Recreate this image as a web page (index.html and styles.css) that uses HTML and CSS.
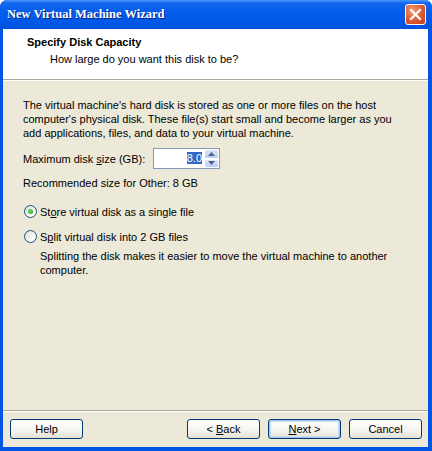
FILE: index.html
```html
<!DOCTYPE html>
<html lang="en">
<head>
    <meta charset="UTF-8">
    <title>New Virtual Machine Wizard</title>
    <link rel="stylesheet" href="styles.css">
</head>
<body>
    <div class="window">
        <div class="titlebar">
            <span class="title">New Virtual Machine Wizard</span>
            <span class="close">
                <svg width="13" height="13" viewBox="0 0 13 13">
                    <path d="M2 2 L11 11 M11 2 L2 11" stroke="#fff" stroke-width="2.2" stroke-linecap="square"/>
                </svg>
            </span>
        </div>

        <div class="frame">
            <div class="header">
                <div class="header-title">Specify Disk Capacity</div>
                <div class="header-sub">How large do you want this disk to be?</div>
            </div>

            <div class="content">
                <p class="intro">The virtual machine's hard disk is stored as one or more files on the host computer's physical disk. These file(s) start small and become larger as you add applications, files, and data to your virtual machine.</p>

                <div class="size-row">
                    <label>Maximum disk <u>s</u>ize (GB):</label>
                    <div class="spin">
                        <span class="spin-value"><span class="sel">8.0</span></span>
                        <span class="spin-btns">
                            <span class="spin-btn">
                                <svg width="7" height="4" viewBox="0 0 7 4"><path d="M0 4 L3.5 0 L7 4 Z" fill="#4d6185"/></svg>
                            </span>
                            <span class="spin-btn">
                                <svg width="7" height="4" viewBox="0 0 7 4"><path d="M0 0 L3.5 4 L7 0 Z" fill="#4d6185"/></svg>
                            </span>
                        </span>
                    </div>
                </div>

                <p class="recommended">Recommended size for Other: 8 GB</p>

                <div class="radio-row first">
                    <span class="radio checked"></span>
                    <span>St<u>o</u>re virtual disk as a single file</span>
                </div>
                <div class="radio-row">
                    <span class="radio"></span>
                    <span>S<u>p</u>lit virtual disk into 2 GB files</span>
                </div>
                <p class="note">Splitting the disk makes it easier to move the virtual machine to another computer.</p>
            </div>

            <div class="footer">
                <button class="btn">Help</button>
                <div class="nav">
                    <button class="btn">&lt; <u>B</u>ack</button>
                    <button class="btn default"><u>N</u>ext &gt;</button>
                    <button class="btn">Cancel</button>
                </div>
            </div>
        </div>
    </div>
</body>
</html>
```

FILE: styles.css
```css
body {
    margin: 0;
    font-family: 'Liberation Sans', Arial, sans-serif;
    font-size: 11px;
    color: #000;
    background: #fff;
}

.window {
    width: 432px;
    height: 451px;
    display: flex;
    flex-direction: column;
    background: #0055e5;
    border-radius: 7px 7px 0 0;
    overflow: hidden;
}

.titlebar {
    height: 29px;
    flex-shrink: 0;
    display: flex;
    align-items: center;
    justify-content: space-between;
    padding: 0 6px 0 7px;
    background: linear-gradient(#4a98fa 0, #1467ee 3px, #0860ec 8px, #0058e8 22px, #0052dc 29px);
}

.title {
    font-family: 'Liberation Serif', serif;
    font-weight: bold;
    font-size: 12.5px;
    color: #fff;
    text-shadow: 1px 1px 0 #0a1e80;
}

.close {
    width: 21px;
    height: 21px;
    box-sizing: border-box;
    border: 1px solid #fff;
    border-radius: 3px;
    background: radial-gradient(circle at 35% 30%, #f29a7a, #e0582f 55%, #c03c16);
    display: flex;
    align-items: center;
    justify-content: center;
}

.frame {
    flex: 1;
    display: flex;
    flex-direction: column;
    margin: 0 4px 4px 3px;
    background: #ece9d8;
}

.header {
    height: 51px;
    background: #fff;
    border-bottom: 1px solid #aca899;
    box-shadow: 0 1px 0 #fff;
    padding: 6px 0 0 24px;
    box-sizing: border-box;
}

.header-title {
    font-weight: bold;
    line-height: 15px;
}

.header-sub {
    padding-left: 23px;
    margin-top: 2px;
    line-height: 14px;
}

.content {
    flex: 1;
    padding: 18px 20px 0 20px;
}

.intro {
    margin: 0;
    line-height: 14px;
}

.size-row {
    display: flex;
    align-items: center;
    margin-top: 8px;
}

.size-row label {
    width: 130px;
}

.spin {
    width: 67px;
    height: 21px;
    box-sizing: border-box;
    border: 1px solid #7f9db9;
    background: #fff;
    display: flex;
}

.spin-value {
    flex: 1;
    text-align: right;
    padding: 2px 2px 0 0;
    line-height: 15px;
}

.sel {
    background: #316ac5;
    color: #fff;
}

.spin-btns {
    width: 15px;
    display: flex;
    flex-direction: column;
}

.spin-btn {
    flex: 1;
    display: flex;
    align-items: center;
    justify-content: center;
    background: linear-gradient(#dbe6fd, #b9cdf7);
    border: 1px solid #fff;
    border-radius: 2px;
}

.recommended {
    margin: 7px 0 0;
    line-height: 14px;
}

.radio-row {
    display: flex;
    align-items: center;
    gap: 3px;
    margin-top: 12px;
    padding-left: 1px;
}

.radio-row.first {
    margin-top: 15px;
}

.radio {
    width: 13px;
    height: 13px;
    box-sizing: border-box;
    border: 1px solid #1c5180;
    border-radius: 50%;
    background: linear-gradient(135deg, #dcdcd6, #fff 80%);
    position: relative;
}

.radio.checked::after {
    content: '';
    position: absolute;
    left: 3px;
    top: 3px;
    width: 5px;
    height: 5px;
    border-radius: 50%;
    background: radial-gradient(circle at 40% 40%, #6bd86b, #21a121);
}

.note {
    margin: 6px 0 0 17px;
    line-height: 14px;
}

.footer {
    height: 37px;
    flex-shrink: 0;
    border-top: 1px solid #aca899;
    box-shadow: inset 0 1px 0 #fff;
    display: flex;
    justify-content: space-between;
    align-items: flex-start;
    padding: 8px 6px 0 7px;
    box-sizing: border-box;
}

.nav {
    display: flex;
    gap: 8px;
}

.btn {
    width: 73px;
    height: 20px;
    padding: 0;
    font-family: inherit;
    font-size: 11px;
    color: #000;
    border: 1px solid #003c74;
    border-radius: 3px;
    background: linear-gradient(#fff, #f4f3ee 60%, #e3e1d6);
}

.btn.default {
    box-shadow: inset 0 0 0 1px #a8c6f3, inset 0 0 0 2px #c9daf6;
}
```
